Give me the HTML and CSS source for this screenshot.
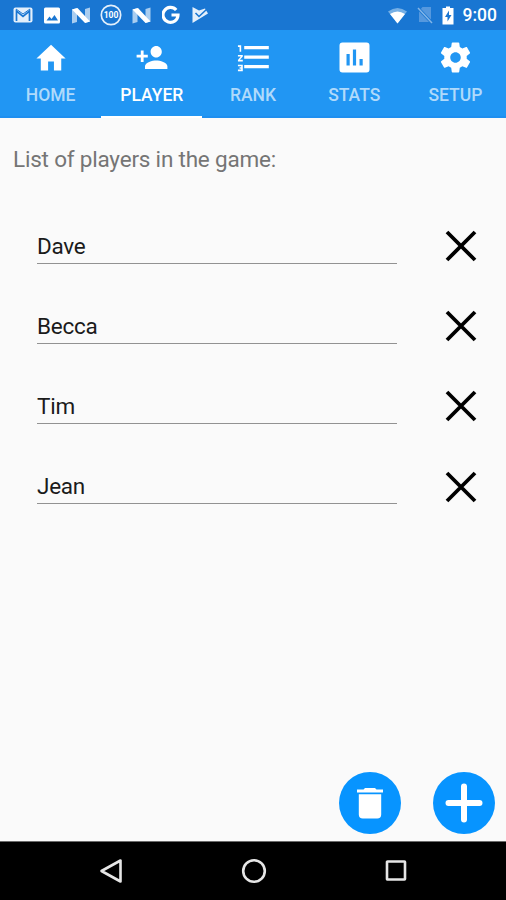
FILE: index.html
```html
<!DOCTYPE html>
<html lang="en">
<head>
<meta charset="utf-8">
<title>Players</title>
<link rel="stylesheet" href="styles.css">
</head>
<body>
<div class="screen">
  <header class="status">
    <div class="notifications">
      <svg width="20" height="16" viewBox="0 0 20 16"><rect x=".5" y=".5" width="19" height="15" rx="2" fill="#e3effb"/><path d="M3.500 14V4l6.500 5.500L16.500 4v10" fill="none" stroke="#1976d2" stroke-width="1.700"/><path d="M3 2l7 5 7-5" fill="none" stroke="#1976d2"/></svg>
      <svg width="17" height="17" viewBox="0 0 17 17"><rect x="1" y=".5" width="16" height="16" rx="1.500" fill="#fff"/><path d="M3.500 13.500l3-4 2 2.500 3-4 3.500 5.500z" fill="#1976d2"/></svg>
      <svg width="20" height="17" viewBox="0 0 20 17"><path d="M2 2.500L7 1v14l-5 1.500zM15 2l5-1.500v14L15 16z" fill="#a9cdf0"/><path d="M2 2.500L7.500 1 20 14.500 15 16z" fill="#fff"/></svg>
      <svg width="22" height="22" viewBox="0 0 22 22"><circle cx="11" cy="11" r="9.700" fill="none" stroke="#e3effb" stroke-width="1.700"/><text x="11" y="13.800" class="badge-text">100</text></svg>
      <svg width="20" height="17" viewBox="0 0 20 17"><path d="M.5 2.500l5-1.500v14l-5 1.500zM13.500 2l5-1.500v14l-5 1.500z" fill="#a9cdf0"/><path d="M.5 2.500L6 1l12.500 13.500-5 1.500z" fill="#fff"/></svg>
      <svg width="20" height="20" viewBox="0 0 20 20"><path d="M14.200 5A7.500 7.500 0 1 0 16 10H9.500" fill="none" stroke="#fff" stroke-width="3.200"/></svg>
      <svg width="18" height="18" viewBox="0 0 18 18"><path d="M.5 1L7 4.500l6-2 3 5L.5 17z" fill="#e3effb"/><path d="M3.500 7L7 10.500 15 3" fill="none" stroke="#1976d2" stroke-width="1.600"/></svg>
    </div>
    <div class="system">
      <svg width="20" height="17" viewBox="0 0 20 17"><path d="M0 4.500Q9.500-2.500 19 4.500L9.500 16.500z" fill="#75afe5"/><path d="M2 7Q9.500 2 17 7L9.500 16.500z" fill="#fff"/></svg>
      <svg class="sim" width="16" height="18" viewBox="0 0 16 18"><path d="M5.500 1H14v15H2V5z" fill="#5598de"/><path d="M1 2l14 15" stroke="#1976d2" stroke-width="3"/><path d="M1 2l14 15" stroke="#83b5e7" stroke-width="1.500"/></svg>
      <svg class="battery" width="12" height="19" viewBox="0 0 12 19"><path d="M4 .5h4V2h3.500v16.500H.5V2H4z" fill="#fff"/><path d="M7 4.500L3 11h2.500v4.500L9.500 9H7z" fill="#1976d2"/></svg>
      <span class="clock">9:00</span>
    </div>
  </header>

  <nav class="tabs">
    <a class="tab"><svg width="36" height="36" viewBox="0 0 36 36"><path transform="translate(.5 .2) scale(1.460 1.520)" d="M10 20v-6h4v6h5v-8h3L12 3 2 12h3v8z"/></svg><span>HOME</span></a>
    <a class="tab active"><svg width="36" height="36" viewBox="0 0 36 36"><path transform="translate(1.200 .3) scale(1.400 1.440)" d="M15 12c2.210 0 4-1.790 4-4s-1.790-4-4-4-4 1.790-4 4 1.790 4 4 4zm-9-2V7H4v3H1v2h3v3h2v-3h3v-2H6zm9 4c-2.670 0-8 1.340-8 4v2h16v-2c0-2.660-5.330-4-8-4z"/></svg><span>PLAYER</span></a>
    <a class="tab"><svg width="36" height="36" viewBox="0 0 36 36"><path transform="translate(-.3 -1.200) scale(1.620)" d="M2 17h2v.5H3v1h1v.5H2v1h3v-4H2v1zm1-9h1V4H2v1h1v3zm-1 3h1.800L2 13.100v.9h3v-1H3.200L5 10.900V10H2v1z"/><path d="M9.200 6h24.600v3.200H9.200zm0 9.500h24.600v3.200H9.200zm0 9.500h24.600v3.200H9.200z"/></svg><span>RANK</span></a>
    <a class="tab"><svg width="36" height="36" viewBox="0 0 36 36"><path fill-rule="evenodd" d="M6.500 2.500h24q3 0 3 3v24q0 3-3 3h-24q-3 0-3-3v-24q0-3 3-3zm4 11.500v11.500h3.200V14zm6.400-4.500v16h3.200v-16zm6.600 9.500v6.500h3.200V19z"/></svg><span>STATS</span></a>
    <a class="tab"><svg width="36" height="36" viewBox="0 0 36 36"><path transform="translate(.5 -.6) scale(1.500)" d="M19.430 12.980c.04-.32.07-.64.07-.98s-.03-.66-.07-.98l2.110-1.650c.19-.15.24-.42.12-.64l-2-3.460c-.12-.22-.39-.3-.61-.22l-2.490 1c-.52-.4-1.080-.73-1.690-.98l-.38-2.650C14.460 2.180 14.250 2 14 2h-4c-.25 0-.46.18-.49.42l-.38 2.650c-.61.25-1.170.59-1.690.98l-2.490-1c-.23-.09-.49 0-.61.22l-2 3.460c-.13.22-.07.49.12.64l2.110 1.650c-.04.32-.07.65-.07.98s.03.66.07.98l-2.110 1.650c-.19.15-.24.42-.12.64l2 3.460c.12.22.39.3.61.22l2.490-1c.52.4 1.080.73 1.690.98l.38 2.650c.03.24.24.42.49.42h4c.25 0 .46-.18.49-.42l.38-2.650c.61-.25 1.170-.59 1.690-.98l2.490 1c.23.09.49 0 .61-.22l2-3.460c.12-.22.07-.49-.12-.64l-2.110-1.650zM12 15.500c-1.930 0-3.500-1.570-3.500-3.500s1.570-3.500 3.500-3.500 3.500 1.570 3.500 3.500-1.570 3.500-3.500 3.500z"/></svg><span>SETUP</span></a>
  </nav>

  <main class="content">
    <h1 class="title">List of players in the game:</h1>
    <ul class="players">
      <li class="player"><span class="name">Dave</span><svg class="remove" width="32" height="32" viewBox="0 0 32 32"><path d="M2 2l28 28M30 2L2 30"/></svg></li>
      <li class="player"><span class="name">Becca</span><svg class="remove" width="32" height="32" viewBox="0 0 32 32"><path d="M2 2l28 28M30 2L2 30"/></svg></li>
      <li class="player"><span class="name">Tim</span><svg class="remove" width="32" height="32" viewBox="0 0 32 32"><path d="M2 2l28 28M30 2L2 30"/></svg></li>
      <li class="player"><span class="name">Jean</span><svg class="remove" width="32" height="32" viewBox="0 0 32 32"><path d="M2 2l28 28M30 2L2 30"/></svg></li>
    </ul>
    <div class="actions">
      <svg width="62" height="62" viewBox="0 0 62 62"><circle cx="31" cy="31" r="31" fill="#0794ff"/><path d="M18 17.500h6.500l1.500-1.500h10l1.500 1.500H44v3H18zM19.800 22.300h22.400v20.200q0 4-4 4H23.800q-4 0-4-4z" fill="#fff"/></svg>
      <svg width="62" height="62" viewBox="0 0 62 62"><circle cx="31" cy="31" r="31" fill="#0794ff"/><path d="M31 14.500v33M15.500 31h31" stroke="#fff" stroke-width="6" stroke-linecap="round"/></svg>
    </div>
  </main>

  <footer class="navbar">
    <svg width="24" height="26" viewBox="0 0 24 26"><path d="M21.500 2.500v21L2.500 13z"/></svg>
    <svg width="26" height="26" viewBox="0 0 26 26"><circle cx="13" cy="13" r="10.800"/></svg>
    <svg width="24" height="24" viewBox="0 0 24 24"><rect x="3" y="2.500" width="18" height="18" rx=".5"/></svg>
  </footer>
</div>
</body>
</html>
```

FILE: styles.css
```css
* { box-sizing: border-box; }
body { margin: 0; font-family: Roboto, sans-serif; }
svg { display: block; flex: none; }

.screen {
  width: 506px;
  height: 900px;
  display: flex;
  flex-direction: column;
  background: #fafafa;
  overflow: hidden;
}

.status {
  height: 30px;
  flex: none;
  display: flex;
  align-items: center;
  justify-content: space-between;
  padding: 0 9px 0 13px;
  background: #1976d2;
}
.notifications { display: flex; align-items: center; gap: 10px; }
.system { display: flex; align-items: center; }
.sim { margin-left: 9px; }
.battery { margin-left: 9px; }
.clock {
  margin-left: 9px;
  font-size: 17.5px;
  font-weight: 500;
  line-height: 32px;
  color: #fff;
}
.badge-text {
  font: 700 8.5px Roboto, sans-serif;
  text-anchor: middle;
  fill: #fff;
}

.tabs {
  height: 88px;
  flex: none;
  display: grid;
  grid-template-columns: repeat(5, 1fr);
  background: #2196f3;
}
.tab {
  display: flex;
  flex-direction: column;
  align-items: center;
  padding-top: 10px;
  font-size: 17.5px;
  font-weight: 500;
  line-height: 20px;
  color: #b0dafb;
  border-bottom: 2px solid #1e8ff0;
}
.tab svg { fill: #fff; }
.tab span { margin-top: 9px; }
.tab.active { color: #fff; border-color: #fff; }

.content { flex: 1; display: flex; flex-direction: column; }
.title {
  margin: 27px 0 0 13px;
  font-size: 22.5px;
  font-weight: 400;
  line-height: 28px;
  letter-spacing: -0.2px;
  color: #757575;
}
.players { margin: 33px 0 0; padding: 0 29px 0 37px; list-style: none; }
.player {
  height: 80.2px;
  display: flex;
  align-items: center;
  justify-content: space-between;
}
.name {
  width: 360px;
  height: 37px;
  margin-bottom: 2px;
  border-bottom: 1px solid #929292;
  font-size: 22.5px;
  line-height: 38px;
  letter-spacing: -0.25px;
  color: #1b1b1b;
}
.remove { fill: none; stroke: #000; stroke-width: 3.8; }
.actions {
  display: flex;
  justify-content: flex-end;
  gap: 32px;
  margin-top: auto;
  padding: 0 11px 7px 0;
}

.navbar {
  height: 59px;
  flex: none;
  display: flex;
  align-items: center;
  justify-content: space-between;
  padding: 0 98px 0 99px;
  background: #000;
  border-top: 1px solid #6b6b6b;
}
.navbar svg { fill: none; stroke: #e6e6e6; stroke-width: 2.6; stroke-linejoin: round; }
```
